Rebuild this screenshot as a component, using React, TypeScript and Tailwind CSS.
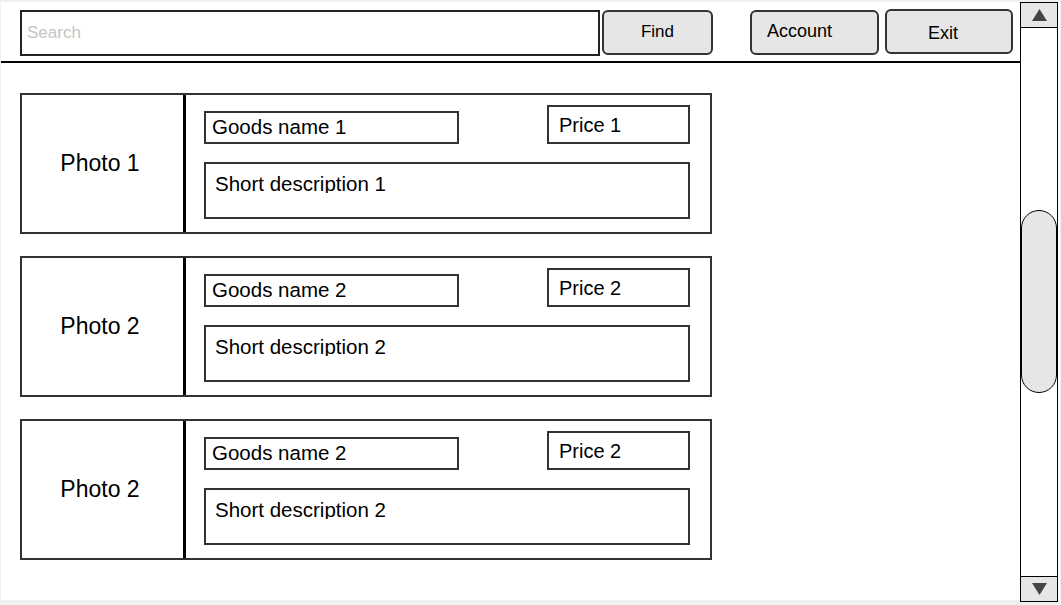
const goods = [
  { photo: 'Photo 1', name: 'Goods name 1', price: 'Price 1', desc: 'Short description 1' },
  { photo: 'Photo 2', name: 'Goods name 2', price: 'Price 2', desc: 'Short description 2' },
  { photo: 'Photo 2', name: 'Goods name 2', price: 'Price 2', desc: 'Short description 2' },
]

const GoodsCard = ({ item }: { item: (typeof goods)[0] }) => (
  <div className="flex w-[692px] h-[141px] border-2 border-[#333] bg-white">
    {/* Photo */}
    <div className="w-[164px] shrink-0 border-r-[3px] border-black flex items-center justify-center pr-[5px] text-[23px] text-black">
      {item.photo}
    </div>

    {/* Details */}
    <div className="flex flex-col pl-[18px] pt-[10px]">
      <div className="flex w-[486px] items-end justify-between">
        <div className="w-[255px] h-[33px] border-2 border-[#333] flex items-center pl-[6px] pb-[2px] text-[20.5px] leading-[20px]">
          {item.name}
        </div>
        <div className="w-[143px] h-[39px] border-2 border-[#333] flex items-center pl-[10px] text-[20px] leading-[20px]">
          {item.price}
        </div>
      </div>
      <div className="mt-[18px] w-[486px] h-[57px] border-2 border-[#333] pl-[9px] pt-[10px]">
        {/* descenders clipped like in the mockup */}
        <div className="h-[19px] overflow-hidden text-[20.5px] leading-[20px] whitespace-nowrap">{item.desc}</div>
      </div>
    </div>
  </div>
)

export default function App() {
  return (
    <div
      className="w-[1061px] h-[605px] bg-[#f0f0f0] pt-[2px] pl-[1px] pr-[1px] pb-[5px] text-black"
      style={{ fontFamily: '"Liberation Sans", Arial, sans-serif' }}
    >
      <div className="flex h-full bg-white">
        {/* Main area */}
        <div className="w-[1019px] shrink-0 flex flex-col">
          {/* Header */}
          <div className="h-[61px] border-b-2 border-black flex items-start pl-[19px] pt-[8px]">
            <div className="w-[580px] h-[46px] border-2 border-[#222] flex items-center pl-[5px] pb-[1px] text-[17px] text-[#c4c4c4]">
              Search
            </div>
            <button className="ml-[2px] w-[111px] h-[45px] rounded-[6px] border-2 border-[#333] bg-[#e6e6e6] flex items-center justify-center text-[17px] pb-[1px]">
              Find
            </button>
            <button className="ml-[37px] w-[129px] h-[45px] rounded-[6px] border-2 border-[#333] bg-[#e6e6e6] flex items-center justify-start pl-[15px] text-[18px] pb-[3px]">
              Account
            </button>
            <button className="ml-[6px] -mt-[1px] w-[128px] h-[45px] rounded-[6px] border-2 border-[#333] bg-[#e6e6e6] flex items-center justify-center pr-[12px] text-[18px] pt-[4px]">
              Exit
            </button>
          </div>

          {/* List */}
          <div className="flex flex-col gap-[22px] pt-[30px] pl-[19px]">
            {goods.map((item, i) => (
              <GoodsCard key={i} item={item} />
            ))}
          </div>
        </div>

        {/* Scrollbar */}
        <div className="w-[38px] h-[600px] shrink-0 border border-black flex flex-col bg-white">
          <div className="h-[25px] shrink-0 border-b border-black bg-[#e6e6e6] flex items-center justify-center pb-[1px]">
            <svg width="15" height="12" viewBox="0 0 15 12">
              <polygon points="7.5,0 15,12 0,12" fill="#444" />
            </svg>
          </div>
          <div className="flex-1">
            <div className="mt-[182px] h-[183px] rounded-full border border-black bg-[#e6e6e6]" />
          </div>
          <div className="h-[25px] shrink-0 border-t border-black bg-[#e6e6e6] flex items-center justify-center">
            <svg width="15" height="12" viewBox="0 0 15 12">
              <polygon points="0,0 15,0 7.5,12" fill="#444" />
            </svg>
          </div>
        </div>
      </div>
    </div>
  )
}
